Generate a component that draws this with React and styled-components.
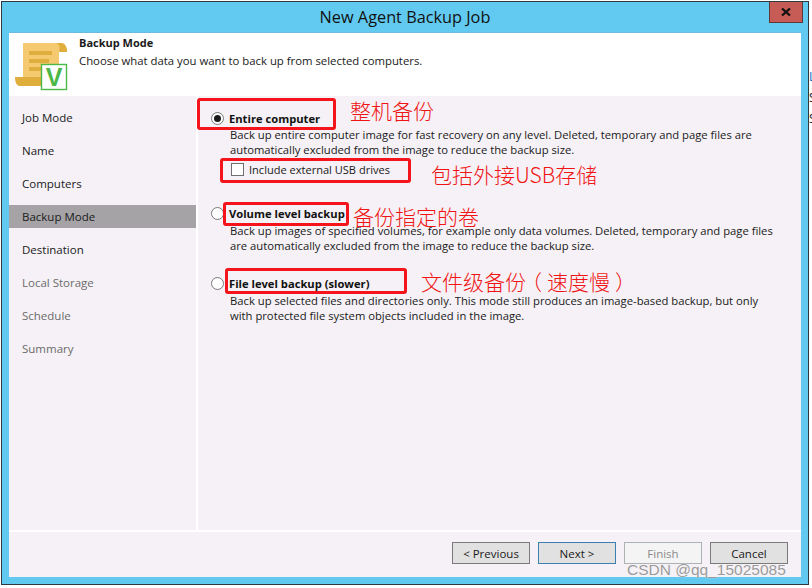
import React from 'react'
import styled, { createGlobalStyle } from 'styled-components'

const GlobalStyle = createGlobalStyle`
  html, body {
    margin: 0;
    padding: 0;
    background: #fff;
  }
  * {
    box-sizing: border-box;
  }
`

const Page = styled.div`
  position: relative;
  width: 812px;
  height: 588px;
  overflow: hidden;
  padding: 1px 0 0 1px;
  font-family: 'Open Sans', 'Noto Sans', sans-serif;
  font-size: 11.5px;
  color: #1a1a1a;
`

const Window = styled.div`
  position: relative;
  width: 808px;
  height: 584px;
  display: flex;
  flex-direction: column;
  background: #62caf0;
  border: 1px solid #2e3a40;
  padding: 0 7px 7px 7px;
`

const TitleBar = styled.div`
  height: 30px;
  display: flex;
  align-items: center;
  justify-content: center;
  font-size: 16.3px;
  color: #111;
`

const CloseButton = styled.div`
  position: absolute;
  top: 0;
  right: 5px;
  width: 34px;
  height: 21px;
  display: flex;
  align-items: center;
  justify-content: center;
  background: #c75b55;
  border: 1px solid #5c3a38;
  border-top: 0;
`

const Inner = styled.div`
  flex: 1;
  display: flex;
  flex-direction: column;
  background: #f5f1f6;
  border-top: 1px solid #6cbbdc;
`

const Header = styled.div`
  height: 63px;
  display: flex;
  background: #fff;
  padding: 2px 0 0 5px;
`

const LogoSlot = styled.div`
  padding-top: 8px;
`

const HeaderText = styled.div`
  margin-left: 11px;
`

const HeaderTitle = styled.div`
  font-weight: 700;
  font-size: 11px;
  line-height: 16px;
`

const HeaderSub = styled.div`
  font-size: 11.35px;
  line-height: 18px;
  margin-top: 1px;
`

const Body = styled.div`
  flex: 1;
  display: flex;
`

const Sidebar = styled.div`
  width: 189px;
  border-right: 2px solid #fff;
  padding-top: 10px;
  display: flex;
  flex-direction: column;
  gap: 10px;
`

const NavItem = styled.div`
  height: 23px;
  display: flex;
  align-items: center;
  padding-left: 13px;
  color: ${(p) => (p.$muted ? '#6b6b6b' : '#1a1a1a')};
  background: ${(p) => (p.$active ? '#a5a3a6' : 'transparent')};
`

const Content = styled.div`
  flex: 1;
  padding: 14px 0 0 13px;
  font-size: 11.25px;
`

const Option = styled.div`
  margin-bottom: ${(p) => p.$gap}px;
`

const OptionHead = styled.div`
  height: 16px;
  display: flex;
  align-items: center;
  gap: 5px;
`

const Radio = styled.span`
  width: 13px;
  height: 13px;
  border-radius: 50%;
  border: 1px solid #7a7a7a;
  background: #fff;
  display: flex;
  align-items: center;
  justify-content: center;
  &::after {
    content: '';
    width: 7px;
    height: 7px;
    border-radius: 50%;
    background: ${(p) => (p.$checked ? '#1a1a1a' : 'transparent')};
  }
`

const OptionTitle = styled.span`
  font-weight: 700;
  font-size: 11.2px;
  color: #111;
`

const Description = styled.div`
  margin: ${(p) => p.$top ?? 2}px 0 0 19px;
  line-height: 15px;
  white-space: nowrap;
`

const CheckRow = styled.label`
  height: 16px;
  margin: 4px 0 1px 20px;
  display: flex;
  align-items: center;
  gap: 5px;
  font-size: 11.05px;
`

const CheckBox = styled.span`
  width: 13px;
  height: 13px;
  border: 1px solid #6f6f6f;
  background: #fff;
`

const Footer = styled.div`
  height: 47px;
  border-top: 2px solid #fff;
  display: flex;
  justify-content: flex-end;
  gap: 8px;
  padding: 10px 13px 0 0;
`

const Button = styled.div`
  width: 78px;
  height: 22px;
  display: flex;
  align-items: center;
  justify-content: center;
  background: ${(p) => (p.$disabled ? '#f4f4f4' : '#e1e1e1')};
  border: 1px solid ${(p) => (p.$primary ? '#3c7fb1' : p.$disabled ? '#adb2b5' : '#7a7a7a')};
  color: ${(p) => (p.$disabled ? '#8a8a8a' : '#1a1a1a')};
`

const Marker = styled.div`
  position: absolute;
  left: ${(p) => p.$x}px;
  top: ${(p) => p.$y}px;
  width: ${(p) => p.$w}px;
  height: ${(p) => p.$h}px;
  border: 3px solid #f5141b;
  border-radius: 3px;
`

const Note = styled.div`
  position: absolute;
  left: ${(p) => p.$x}px;
  top: ${(p) => p.$y}px;
  font-family: 'Noto Sans CJK SC', sans-serif;
  font-weight: 300;
  font-size: 21px;
  line-height: 26px;
  color: #f01414;
  white-space: nowrap;
`

// the screenshot's font centres the full-width brackets in their em box
const Paren = styled.span`
  display: inline-block;
  transform: translateX(${(p) => p.$shift}px);
`

const Behind = styled.div`
  position: absolute;
  left: 809px;
  top: ${(p) => p.$y}px;
  font-size: 12px;
  line-height: 14px;
  color: ${(p) => p.$color};
`

const Watermark = styled.div`
  position: absolute;
  left: 627px;
  top: 561px;
  font-family: 'Liberation Sans', sans-serif;
  font-size: 15.5px;
  line-height: 18px;
  color: #9a9a9a;
  text-shadow: 0 0 1px #fff;
  white-space: nowrap;
`

const ScrollLogo = () => (
  <svg width="54" height="50" viewBox="0 0 54 50">
    <path d="M9 0H47C51 0 53 4 53 9H45V35H9Z" fill="#f5c96f" />
    <path d="M42 0C46 1 46 5 45 9H53C53 4 51 0 47 0Z" fill="#e0ae3c" />
    <path d="M1 34H30V43H6C3 43 1 40 1 34Z" fill="#e0ae3c" />
    <rect x="15" y="8" width="23" height="4" fill="#e0ae3c" />
    <rect x="15" y="16" width="20" height="4" fill="#e0ae3c" />
    <rect x="15" y="24" width="14" height="4" fill="#e0ae3c" />
    <rect x="27.5" y="21.5" width="25" height="25" fill="#fff" stroke="#4db848" strokeWidth="1.4" />
    <text x="40" y="43" textAnchor="middle" fontFamily="Liberation Sans, sans-serif" fontWeight="700" fontSize="25" fill="#4db848">V</text>
  </svg>
)

const CloseIcon = () => (
  <svg width="10" height="8" viewBox="0 0 10 8">
    <path d="M1 0.5L9 7.5M9 0.5L1 7.5" stroke="#111" strokeWidth="2.2" />
  </svg>
)

const steps = [
  { label: 'Job Mode' },
  { label: 'Name' },
  { label: 'Computers' },
  { label: 'Backup Mode', active: true },
  { label: 'Destination' },
  { label: 'Local Storage', muted: true },
  { label: 'Schedule', muted: true },
  { label: 'Summary', muted: true },
]

export default function App() {
  return (
    <Page>
      <GlobalStyle />
      <Behind $y={70} $color="#1070c0">L</Behind>
      <Behind $y={91} $color="#222">S</Behind>
      <Behind $y={112} $color="#222">S</Behind>
      <Window>
        <TitleBar>New Agent Backup Job</TitleBar>
        <CloseButton>
          <CloseIcon />
        </CloseButton>
        <Inner>
          <Header>
            <LogoSlot>
              <ScrollLogo />
            </LogoSlot>
            <HeaderText>
              <HeaderTitle>Backup Mode</HeaderTitle>
              <HeaderSub>Choose what data you want to back up from selected computers.</HeaderSub>
            </HeaderText>
          </Header>
          <Body>
            <Sidebar>
              {steps.map((s) => (
                <NavItem key={s.label} $active={s.active} $muted={s.muted}>
                  {s.label}
                </NavItem>
              ))}
            </Sidebar>
            <Content>
              <Option $gap={28}>
                <OptionHead>
                  <Radio $checked />
                  <OptionTitle>Entire computer</OptionTitle>
                </OptionHead>
                <Description $top={1}>
                  Back up entire computer image for fast recovery on any level. Deleted, temporary and page files are
                  <br />
                  automatically excluded from the image to reduce the backup size.
                </Description>
                <CheckRow>
                  <CheckBox />
                  Include external USB drives
                </CheckRow>
              </Option>
              <Option $gap={22}>
                <OptionHead>
                  <Radio />
                  <OptionTitle>Volume level backup</OptionTitle>
                </OptionHead>
                <Description>
                  Back up images of specified volumes, for example only data volumes. Deleted, temporary and page files
                  <br />
                  are automatically excluded from the image to reduce the backup size.
                </Description>
              </Option>
              <Option $gap={0}>
                <OptionHead>
                  <Radio />
                  <OptionTitle>File level backup (slower)</OptionTitle>
                </OptionHead>
                <Description>
                  Back up selected files and directories only. This mode still produces an image-based backup, but only
                  <br />
                  with protected file system objects included in the image.
                </Description>
              </Option>
            </Content>
          </Body>
          <Footer>
            <Button>&lt; Previous</Button>
            <Button $primary>Next &gt;</Button>
            <Button $disabled>Finish</Button>
            <Button>Cancel</Button>
          </Footer>
        </Inner>
      </Window>

      <Marker $x={197} $y={98} $w={139} $h={32} />
      <Marker $x={220} $y={158} $w={191} $h={25} />
      <Marker $x={223} $y={202} $w={126} $h={24} />
      <Marker $x={225} $y={268} $w={182} $h={26} />

      <Note $x={350} $y={97}>整机备份</Note>
      <Note $x={431} $y={161}>包括外接USB存储</Note>
      <Note $x={353} $y={203}>备份指定的卷</Note>
      <Note $x={421} $y={268}>文件级备份<Paren $shift={-5}>（</Paren>速度慢<Paren $shift={5}>）</Paren></Note>

      <Watermark>CSDN @qq_15025085</Watermark>
    </Page>
  )
}
